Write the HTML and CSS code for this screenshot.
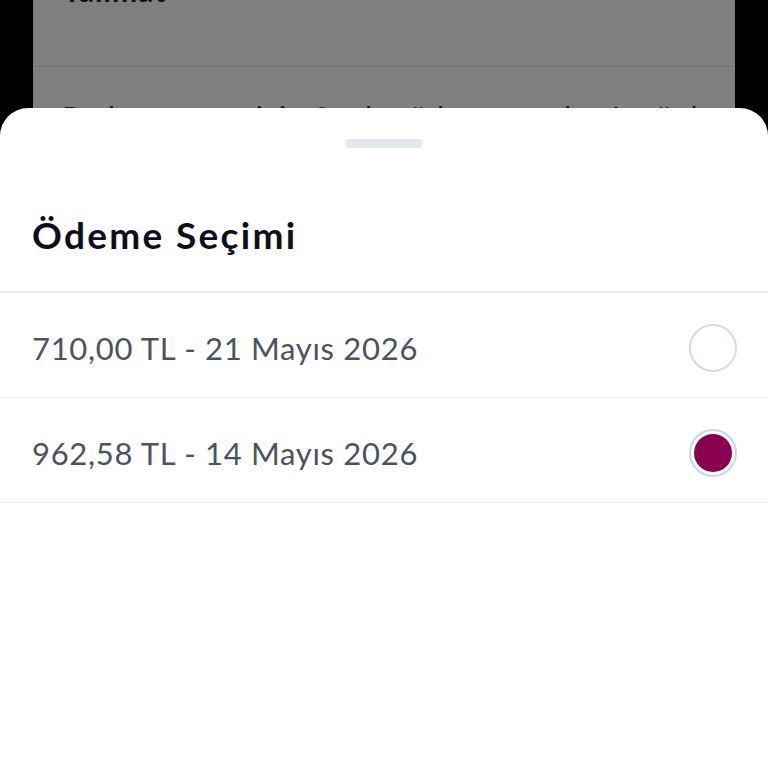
FILE: index.html
```html
<!DOCTYPE html>
<html lang="tr">
<head>
<meta charset="utf-8">
<link rel="stylesheet" href="styles.css">
</head>
<body>
<div class="backdrop">
  <div class="bg-card">
    <div class="bg-row bg-row-first"><span class="bg-title">Talimat</span></div>
    <div class="bg-row bg-row-second"><span class="bg-text">Bu kampanya için 3 adet ödeme vardır. Aşağıdan</span></div>
  </div>
</div>
<div class="sheet">
  <div class="handle-wrap"><div class="handle"></div></div>
  <h1 class="sheet-title">Ödeme Seçimi</h1>
  <ul class="options">
    <li class="option">
      <span class="option-label">710,00 TL - 21 Mayıs 2026</span>
      <span class="radio"></span>
    </li>
    <li class="option">
      <span class="option-label">962,58 TL - 14 Mayıs 2026</span>
      <span class="radio radio-checked"><span class="radio-dot"></span></span>
    </li>
  </ul>
</div>
</body>
</html>
```
FILE: styles.css
```css
* { box-sizing: border-box; }
html, body {
  margin: 0;
  padding: 0;
  width: 768px;
  height: 768px;
  overflow: hidden;
  background: #000;
  font-family: Lato, "Noto Sans", sans-serif;
}
.backdrop {
  height: 768px;
  padding: 0 33px;
}
.bg-card {
  height: 100%;
  background: #7f7f7f;
}
.bg-row-first {
  height: 67px;
  border-bottom: 2px solid #787878;
  overflow: hidden;
}
.bg-title {
  display: block;
  margin-top: -28px;
  padding-left: 30px;
  font-size: 30px;
  font-weight: 700;
  letter-spacing: 1px;
  color: #111;
}
.bg-row-second {
  padding: 32px 0 0 29px;
}
.bg-text {
  font-size: 30px;
  color: #141414;
  letter-spacing: 0.8px;
}
.sheet {
  position: absolute;
  left: 0;
  top: 108px;
  width: 768px;
  height: 680px;
  background: #fff;
  border-radius: 28px 28px 0 0;
}
.handle-wrap {
  display: flex;
  justify-content: center;
  padding-top: 31px;
}
.handle {
  width: 78px;
  height: 9px;
  border-radius: 5px;
  background: #e3e8ee;
}
.sheet-title {
  margin: 0;
  padding: 65px 32px 34px;
  font-size: 37px;
  line-height: 44px;
  font-weight: 700;
  letter-spacing: 2.3px;
  color: #0e0e1e;
  border-bottom: 2px solid #e2e8ee;
}
.options {
  list-style: none;
  margin: 0;
  padding: 0;
}
.option {
  display: flex;
  align-items: center;
  justify-content: space-between;
  height: 105px;
  padding: 6px 31px 0 32px;
  border-bottom: 1.5px solid #eceff3;
}
.option-label {
  font-size: 31px;
  color: #4b5263;
  letter-spacing: 0.7px;
}
.radio {
  width: 48px;
  height: 48px;
  border-radius: 50%;
  border: 2px solid #d4dbe5;
  display: flex;
  align-items: center;
  justify-content: center;
}
.radio-checked {
  border-color: #c9d6e3;
}
.radio-dot {
  width: 38px;
  height: 38px;
  border-radius: 50%;
  background: #8a0150;
}
```
